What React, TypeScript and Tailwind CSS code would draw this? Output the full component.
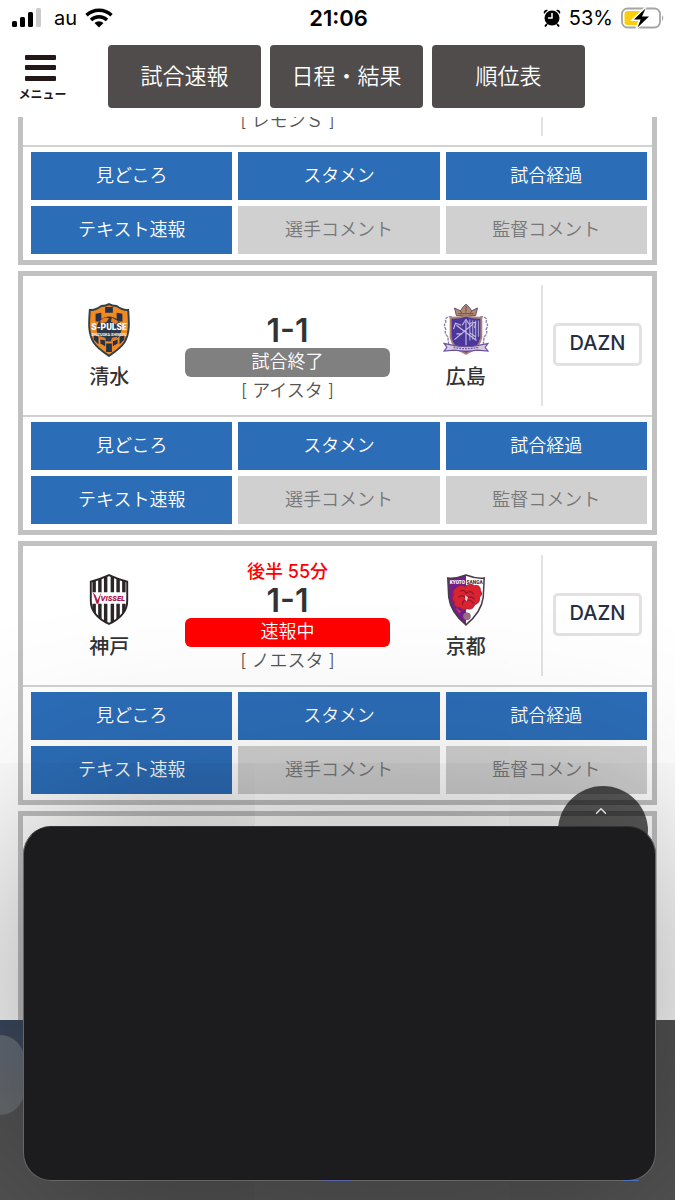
import type { ReactNode } from "react";
import { ChevronUp } from "lucide-react";

const FONT_JP = "font-['Inter','Noto_Sans_CJK_JP',sans-serif]";

interface Match {
  home?: string;
  away?: string;
  homeCrest?: ReactNode;
  awayCrest?: ReactNode;
  minute?: string;
  score?: string;
  status?: string;
  live?: boolean;
  venue: string;
}

const NAV = ["試合速報", "日程・結果", "順位表"];

const ACTIONS = [
  { label: "見どころ", enabled: true },
  { label: "スタメン", enabled: true },
  { label: "試合経過", enabled: true },
  { label: "テキスト速報", enabled: true },
  { label: "選手コメント", enabled: false },
  { label: "監督コメント", enabled: false },
];

function ShimizuCrest() {
  const shield = "M16 3 Q21 3 24 1 Q27 3 32 3 Q39 8 44 7 C45 20 46 31 40 41 C36 47 30 51 24 55 C18 51 12 47 8 41 C2 31 3 20 4 7 Q9 8 16 3Z";
  return (
    <svg viewBox="0 0 48 56" className="h-[54px] w-[46px]" aria-hidden="true">
      <path d={shield} fill="#f18a21" stroke="#323f49" strokeWidth="2" />
      <path d="M20 4h8v6h-8z M10 11l6-1v9h-6z M32 10l6 1v8h-6z M8 33l5 2v8l-5-5z M40 33l-5 2v8l5-5z M15 38l5 1v6l-5-3z M33 38l-5 1v6l5-3z M21 42h6v9h-6z" fill="#24314a" />
      <circle cx="24" cy="27" r="13" fill="#2c3848" />
      <path d="M15 18q5-5 9-2l-3 4-6 1z M27 15l7 4-3 3-5-3z M13 34l7 2 1 3-5-1z M27 36l6-1-2 4-5 1z" fill="#e77e24" />
      <text x="24" y="28" textAnchor="middle" fill="#fff" className="font-[Roboto] text-[9px] font-black">S-PULSE</text>
      <text x="24" y="34" textAnchor="middle" fill="#fff" className="font-[Roboto] text-[4px] font-bold">SHIZUOKA SHIMIZU</text>
    </svg>
  );
}

function HiroshimaCrest() {
  return (
    <svg viewBox="0 0 48 56" className="h-[54px] w-[46px]" aria-hidden="true">
      <path d="M14 13 L12 5 L18 8 L21 4 L24 1 L27 4 L30 8 L36 5 L34 13Z" fill="#b18a68" stroke="#624b78" strokeWidth="1" />
      <path d="M16 11h16M24 3v7M18 8l2 3M30 8l-2 3" stroke="#68477c" strokeWidth="1" />
      <path d="M9 14 Q1 14 3 20 Q0 23 3 27 Q1 32 5 35 L6 43 M39 14 Q47 14 45 20 Q48 23 45 27 Q47 32 43 35 L42 43" fill="#fff" stroke="#8b7cae" strokeWidth="1.4" strokeDasharray="3 1" />
      <path d="M8 15 Q16 16 24 13 Q32 16 40 15 V36 Q38 47 24 53 Q10 47 8 36Z" fill="#4b369b" stroke="#a98272" strokeWidth="2" />
      <path d="M28 17v22M31 18v20M34 18v20M37 18v17" stroke="#9f9bcc" strokeWidth="1.3" />
      <path d="M24 44V19M12 38L31 22M35 39L14 23M20 23l4-6 4 6M11 27l2-6 6 2M28 21l6-1-1 6M14 32h6M28 31l6 4" fill="none" stroke="#c6bce1" strokeWidth="1.2" />
      <path d="M1 42l10 2q13 3 26 0l10-2-3 4 3 4-11-1q-12 2-24 0l-11 1 3-4z" fill="#d8cae0" stroke="#6952a0" strokeWidth="1.2" />
      <path d="M11 46q13 3 26 0" fill="none" stroke="#7d599b" strokeWidth="1.4" strokeDasharray="2 1" />
    </svg>
  );
}

function KobeCrest() {
  const shield = "M24 2 Q33 6 43 9 L43 29 Q43 44 24 53 Q5 44 5 29 L5 9 Q15 6 24 2Z";
  return (
    <svg viewBox="0 0 48 56" className="h-[54px] w-[46px]" aria-hidden="true">
      <clipPath id="kobe">
        <path d={shield} />
      </clipPath>
      <path d={shield} fill="#fff" />
      <path d="M8.5 4v50M14.5 4v50M20.5 2v54M27.5 2v54M33.5 4v50M39.5 4v50" stroke="#2b2527" strokeWidth="3.6" clipPath="url(#kobe)" />
      <path d="M6 20h36v12H6z" fill="#fff" />
      <path d={shield} fill="none" stroke="#2b2527" strokeWidth="2" />
      <path d="M7 20l3 3 2 5 4-8-3 12h-2z" fill="#b21e4e" />
      <text x="28" y="29" textAnchor="middle" fill="#ad174a" className="font-[Roboto] text-[8px] font-black italic">VISSEL</text>
    </svg>
  );
}

function KyotoCrest() {
  const shield = "M24 2 Q34 6 43 5 L42 25 Q40 41 24 54 Q8 41 6 25 L5 5 Q14 6 24 2Z";
  return (
    <svg viewBox="0 0 48 56" className="h-[54px] w-[46px]" aria-hidden="true">
      <path d={shield} fill="#fff" />
      <path d="M24 2v52Q8 41 6 25L5 5Q14 6 24 2Z" fill="#72218c" />
      <path d={shield} fill="none" stroke="#4c3947" strokeWidth="1.6" />
      <path d="M13 16q5-5 10-2 5-4 10-1 6-1 6 5 3 4-1 7 1 6-5 8-2 6-8 4-4 3-7-1-7 0-6-6-4-3-1-7-2-5 2-7z" fill="#da2230" stroke="#97243d" strokeWidth="1" />
      <path d="M18 19q4-3 6 2 5-4 8 1M16 25q5-3 8 1 5-3 9 1M20 33q1-6 5-5 5 0 7 4" fill="none" stroke="#8f1732" strokeWidth="1.3" />
      <path d="M23 23l3 2-1 4-2-1z" fill="#e8cdd8" />
      <path d="M13 36l6 4-2 2z" fill="#d3375f" />
      <circle cx="25" cy="45" r="3.6" fill="#a46a85" stroke="#777" />
      <text x="15" y="11" textAnchor="middle" fill="#fff" className="font-[Roboto] text-[5px] font-black">KYOTO</text>
      <text x="33" y="11" textAnchor="middle" fill="#443347" className="font-[Roboto] text-[5px] font-black">SANGA</text>
    </svg>
  );
}

const MATCHES: Match[] = [
  { venue: "[ レモンＳ ]" },
  { home: "清水", away: "広島", homeCrest: <ShimizuCrest />, awayCrest: <HiroshimaCrest />, score: "1-1", status: "試合終了", venue: "[ アイスタ ]" },
  { home: "神戸", away: "京都", homeCrest: <KobeCrest />, awayCrest: <KyotoCrest />, minute: "後半 55分", score: "1-1", status: "速報中", live: true, venue: "[ ノエスタ ]" },
];

function StatusBar() {
  return (
    <div className="grid h-9 shrink-0 grid-cols-3 items-center pl-3 pr-[10px] text-xl text-black">
      <div className="flex items-center gap-2">
        <svg viewBox="0 0 30 20" className="h-5 w-[30px]" aria-hidden="true">
          <rect x="0" y="13" width="5" height="6" rx="1.5" />
          <rect x="8" y="9" width="5" height="10" rx="1.5" />
          <rect x="16" y="4" width="5" height="15" rx="1.5" />
          <rect x="24" y="0" width="5" height="19" rx="1.5" fill="#ccc" />
        </svg>
        <span className="pl-1">au</span>
        <svg viewBox="0 0 28 20" className="h-5 w-7" aria-hidden="true">
          <g fill="none" stroke="#000" strokeWidth="3.4">
            <path d="M1.5 7.3a18 18 0 0 1 25 0" />
            <path d="M6 12a11.5 11.5 0 0 1 16 0" />
          </g>
          <path d="M9.5 15a6.5 6.5 0 0 1 9 0L14 19.6z" />
        </svg>
      </div>
      <span className="text-center text-[22px] font-semibold">21:06</span>
      <div className="flex items-center justify-end gap-2">
        <svg viewBox="0 0 18 20" className="h-5 w-[18px]" aria-hidden="true">
          <circle cx="9" cy="10" r="7.5" />
          <path d="M1 6a3 3 0 0 1 4-4zM17 6a3 3 0 0 0-4-4z" />
          <path d="M4 16l-2 2.5M14 16l2 2.5" stroke="#000" strokeWidth="2" />
          <path d="M9 5v5H5" fill="none" stroke="#fff" strokeWidth="1.5" />
        </svg>
        <span>53%</span>
        <svg viewBox="0 0 44 22" className="h-[22px] w-11" aria-hidden="true">
          <rect x="1" y="1.5" width="38" height="19" rx="5.5" fill="#fff" stroke="#a5a5a5" strokeWidth="1.8" />
          <path d="M41 8q2.5 3 0 6z" fill="#a5a5a5" />
          <rect x="3.5" y="4" width="18" height="14" rx="3" fill="#fbce0b" />
          <path d="M24.5 .5L11.5 13h7L15.5 21.5L29.5 9h-8z" stroke="#fff" strokeWidth="2" />
          <path d="M24.5 1.500L13 12.500h7L16.500 20.500L28 9.500h-7z" />
        </svg>
      </div>
    </div>
  );
}

function Header() {
  return (
    <header className="flex h-[81px] shrink-0 items-center gap-[9px] px-5 pb-1 pt-1">
      <button type="button" className="mr-[34px] flex w-[45px] flex-col items-center whitespace-nowrap pt-1">
        <svg viewBox="0 0 32 28" className="mr-1 h-7 w-8" fill="#231815" aria-hidden="true">
          <rect y="1" width="31" height="5" rx="1" />
          <rect y="11" width="31" height="5" rx="1" />
          <rect y="22" width="31" height="5" rx="1" />
        </svg>
        <span className="mt-[5px] text-[12px] font-bold leading-4 text-[#231815]">メニュー</span>
      </button>
      <nav className="flex flex-1 gap-[9px] pr-[70px]">
        {NAV.map((label) => (
          <a
            key={label}
            href="#"
            className="flex h-[63px] flex-1 items-center justify-center rounded-[4px] bg-[#504c4b] text-[22px] font-[350] text-white"
          >
            {label}
          </a>
        ))}
      </nav>
    </header>
  );
}

function Team({ name, crest }: { name?: string; crest?: ReactNode }) {
  return (
    <div className="flex flex-col items-center gap-[3px] pt-[26px]">
      <div className="flex h-14 items-center">{crest}</div>
      <span className="text-xl font-medium leading-8 text-[#333]">{name}</span>
    </div>
  );
}

function MatchCard({ match }: { match: Match }) {
  return (
    <article className="border-[5px] border-[#c1c1c1] bg-white">
      <div className="flex h-[141px] border-b-2 border-[#d2d2d2]">
        <div className="grid flex-1 grid-cols-[30fr_41fr_30fr] pl-[11px]">
          <Team name={match.home} crest={match.homeCrest} />
          <div className="flex flex-col pt-[13px] text-center">
            <span className="h-6 text-lg font-medium leading-[26px] text-[#f00]">{match.minute}</span>
            <span className="h-[35px] text-[32px] font-semibold leading-9 text-[#333]">{match.score}</span>
            <span
              className={`h-[29px] rounded-md text-lg font-[350] leading-7 text-white ${match.live ? "bg-[#f00]" : "bg-[#808080]"}`}
            >
              {match.status}
            </span>
            <span className="text-lg font-[350] leading-7 text-[#555]">{match.venue}</span>
          </div>
          <Team name={match.away} crest={match.awayCrest} />
        </div>
        <div className="my-[9px] flex w-[111px] items-center justify-center border-l-2 border-[#e2e2e2] pb-[2px]">
          {match.score && (
            <a
              href="#"
              className="flex h-[43px] w-[89px] items-center justify-center rounded-[5px] border-[3px] border-[#e2e2e2] bg-white pb-1 text-xl font-medium text-[#252e42]"
            >
              DAZN
            </a>
          )}
        </div>
      </div>
      <div className="grid grid-cols-3 gap-[6px] pb-[6px] pl-2 pr-[5px] pt-[5px]">
        {ACTIONS.map(({ label, enabled }) => (
          <button
            key={label}
            type="button"
            disabled={!enabled}
            className={`h-12 text-lg font-[350] ${enabled ? "bg-[#2c6db8] text-white" : "bg-[#d0d0d0] text-[#777]"}`}
          >
            {label}
          </button>
        ))}
      </div>
    </article>
  );
}

export default function App() {
  return (
    <div className={`relative flex h-screen flex-col overflow-hidden bg-white ${FONT_JP}`}>
      <StatusBar />
      <Header />

      {/* Match list, scrolled part way down */}
      <main className="relative min-h-0 flex-1 overflow-hidden px-[18px]">
        <div className="-mt-[116px] flex flex-col gap-[6px]">
          {MATCHES.map((match) => (
            <MatchCard key={match.venue} match={match} />
          ))}
          <div className="h-[264px] border-[5px] border-[#c1c1c1] bg-white" />
        </div>
      </main>

      <footer className="relative h-[180px] shrink-0 overflow-hidden bg-[#545454]">
        <div className="h-24 w-10 bg-linear-to-b from-[#3c4961] to-[#545454]" />
        <div className="absolute -left-14 top-[15px] h-20 w-20 rounded-3xl bg-linear-to-b from-[#646e7c] to-[#6b6d70]" />
      </footer>

      <button
        type="button"
        aria-label="up"
        className="absolute bottom-[324px] right-[27px] flex size-[90px] justify-center rounded-full bg-black/65 pr-1 pt-4 text-white"
      >
        <ChevronUp className="size-[18px]" strokeWidth={2} />
      </button>

      {/* Floating panel */}
      <div className="absolute bottom-[19px] left-[23px] right-[19px] h-[355px] rounded-[28px] border border-[#666] border-t-[#333] bg-[#1c1c1e] shadow-[0_0_200px_rgba(0,0,0,0.42)]">
        <div className="absolute -bottom-px left-[300px] h-px w-7 bg-[#5363a5]" />
        <div className="absolute -bottom-px right-4 h-px w-4 bg-[#4b70bd]" />
      </div>
    </div>
  );
}
